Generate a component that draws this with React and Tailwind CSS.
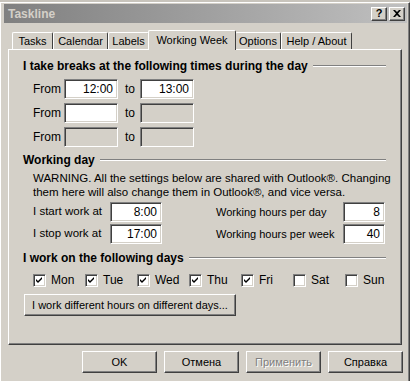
import React from 'react';

const FONT = "font-['Liberation_Sans',Arial,sans-serif]";

const sunken =
  'border border-t-[#808080] border-l-[#808080] border-b-white border-r-white shadow-[inset_1px_1px_0_#404040,inset_-1px_-1px_0_#d4d0c8]';
const raised =
  'border border-t-white border-l-white border-b-[#404040] border-r-[#404040] shadow-[inset_-1px_-1px_0_#808080]';

const Field = ({ value, disabled, w = 'w-[54px]' }) => (
  <div
    className={`${w} h-[20px] ${sunken} ${disabled ? 'bg-[#d4d0c8]' : 'bg-white'} flex items-center justify-end pr-[4px] text-[12px] text-black`}
  >
    {value}
  </div>
);

const Header = ({ children }) => (
  <div className="flex items-center h-[14px] pl-[14px] pr-[15px]">
    <span className="font-bold text-[12px] text-black whitespace-nowrap">{children}</span>
    <div className="flex-1 ml-[5px] h-[2px] border-t border-t-[#808080] border-b border-b-white" />
  </div>
);

const Check = ({ label, checked }) => (
  <div className="flex items-center w-[52px] shrink-0">
    <div className={`w-[13px] h-[13px] bg-white ${sunken} flex items-center justify-center`}>
      {checked && (
        <svg width="7" height="7" viewBox="0 0 7 7">
          <path d="M0 2 L2 4 L6 0 L6 2 L2 6 L0 4 Z" fill="#000" />
        </svg>
      )}
    </div>
    <span className="ml-[5px] text-[12px] whitespace-nowrap">{label}</span>
  </div>
);

const Button = ({ children, disabled, w = 'w-[75px]' }) => (
  <div
    className={`${w} h-[22px] ${raised} bg-[#d4d0c8] flex items-center justify-center text-[11px] whitespace-nowrap ${disabled ? 'text-[#808080] [text-shadow:1px_1px_0_#fff]' : 'text-black'}`}
  >
    {children}
  </div>
);

const tabs = ['Tasks', 'Calendar', 'Labels', 'Working Week', 'Options', 'Help / About'];
const tabWidths = ['w-[41px]', 'w-[55px]', 'w-[41px]', 'w-[88px]', 'w-[46px]', 'w-[71px]'];

export default function App() {
  return (
    <div className={`w-[410px] h-[381px] overflow-hidden bg-[#d4d0c8] ${FONT} text-black`}>
      {/* top strip from the window behind */}
      <div className="h-[2px] bg-[#c8c4bc]" />
      <div className="h-[379px] border-l border-t border-l-white border-t-white border-r border-r-[#404040] pl-[2px] pt-[1px] pr-[2px] shadow-[inset_-1px_0_0_#808080]">
        {/* Title bar */}
        <div className="h-[19px] ml-[1px] bg-gradient-to-r from-[#808080] to-[#c0c0c0] flex items-center pl-[4px] pr-[2px]">
          <span className="font-bold text-[12px] text-[#d4d0c8] flex-1">Taskline</span>
          <div className={`w-[16px] h-[14px] ${raised} bg-[#d4d0c8] flex items-center justify-center text-[11px] font-bold leading-none`}>?</div>
          <div className={`w-[16px] h-[14px] ml-[2px] ${raised} bg-[#d4d0c8] flex items-center justify-center`}>
            <svg width="8" height="7" viewBox="0 0 8 7">
              <path d="M0 0h2l2 2 2-2h2L5 3.5 8 7H6L4 5 2 7H0l3-3.5z" fill="#000" />
            </svg>
          </div>
        </div>

        {/* Tabs */}
        <div className="flex items-end h-[26px] pl-[9px]">
          {tabs.map((t, i) => {
            const sel = i === 3;
            return (
              <div
                key={t}
                className={`${tabWidths[i]} ${sel ? 'h-[20px] -mx-[1px] relative z-10 bg-[#d4d0c8] -mb-[1px]' : 'h-[17px]'} border-l border-t border-r border-l-white border-t-white border-r-[#404040] rounded-t-[2px] flex items-center justify-center text-[11px] whitespace-nowrap`}
              >
                {t}
              </div>
            );
          })}
        </div>

        {/* Panel */}
        <div className="ml-[5px] w-[394px] h-[296px] border-l border-t border-l-white border-t-white border-r border-b border-r-[#404040] border-b-[#404040] shadow-[inset_-1px_-1px_0_#808080] pt-[9px]">
          <Header>I take breaks at the following times during the day</Header>
          <div className="flex flex-col gap-[4px] mt-[6px] pl-[24px]">
            {[
              ['12:00', '13:00', false, false],
              ['', '', false, true],
              ['', '', true, true],
            ].map(([a, b, d1, d2], i) => (
              <div key={i} className="flex items-center text-[12px]">
                <span className="w-[31px]">From</span>
                <Field value={a} disabled={d1} />
                <span className="w-[22px] pl-[7px]">to</span>
                <Field value={b} disabled={d2} />
              </div>
            ))}
          </div>

          <div className="mt-[6px]">
            <Header>Working day</Header>
          </div>
          <div className="pl-[24px] mt-[4px] text-[11.5px] leading-[14px] whitespace-nowrap">
            WARNING. All the settings below are shared with Outlook®. Changing
            <br />
            them here will also change them in Outlook®, and vice versa.
          </div>
          <div className="flex flex-col gap-[2px] mt-[3px] pl-[24px] text-[11.5px] whitespace-nowrap">
            {[
              ['I start work at', '8:00', 'Working hours per day', '8'],
              ['I stop work at', '17:00', 'Working hours per week', '40'],
            ].map(([l1, v1, l2, v2]) => (
              <div key={l1} className="flex items-center">
                <span className="w-[77px]">{l1}</span>
                <Field value={v1} w="w-[52px]" />
                <span className="w-[181px] pl-[54px] text-[11px]">{l2}</span>
                <Field value={v2} w="w-[42px]" />
              </div>
            ))}
          </div>

          <div className="mt-[7px]">
            <Header>I work on the following days</Header>
          </div>
          <div className="flex mt-[6px] pl-[24px]">
            <Check label="Mon" checked />
            <Check label="Tue" checked />
            <Check label="Wed" checked />
            <Check label="Thu" checked />
            <Check label="Fri" checked />
            <Check label="Sat" />
            <Check label="Sun" />
          </div>
          <div className="mt-[5px] pl-[15px]">
            <Button w="w-[212px]">I work different hours on different days...</Button>
          </div>
        </div>

        {/* Dialog buttons */}
        <div className="flex justify-end gap-[7px] mt-[6px] pr-[4px]">
          <Button>OK</Button>
          <Button>Отмена</Button>
          <Button disabled>Применить</Button>
          <Button>Справка</Button>
        </div>
      </div>
    </div>
  );
}
